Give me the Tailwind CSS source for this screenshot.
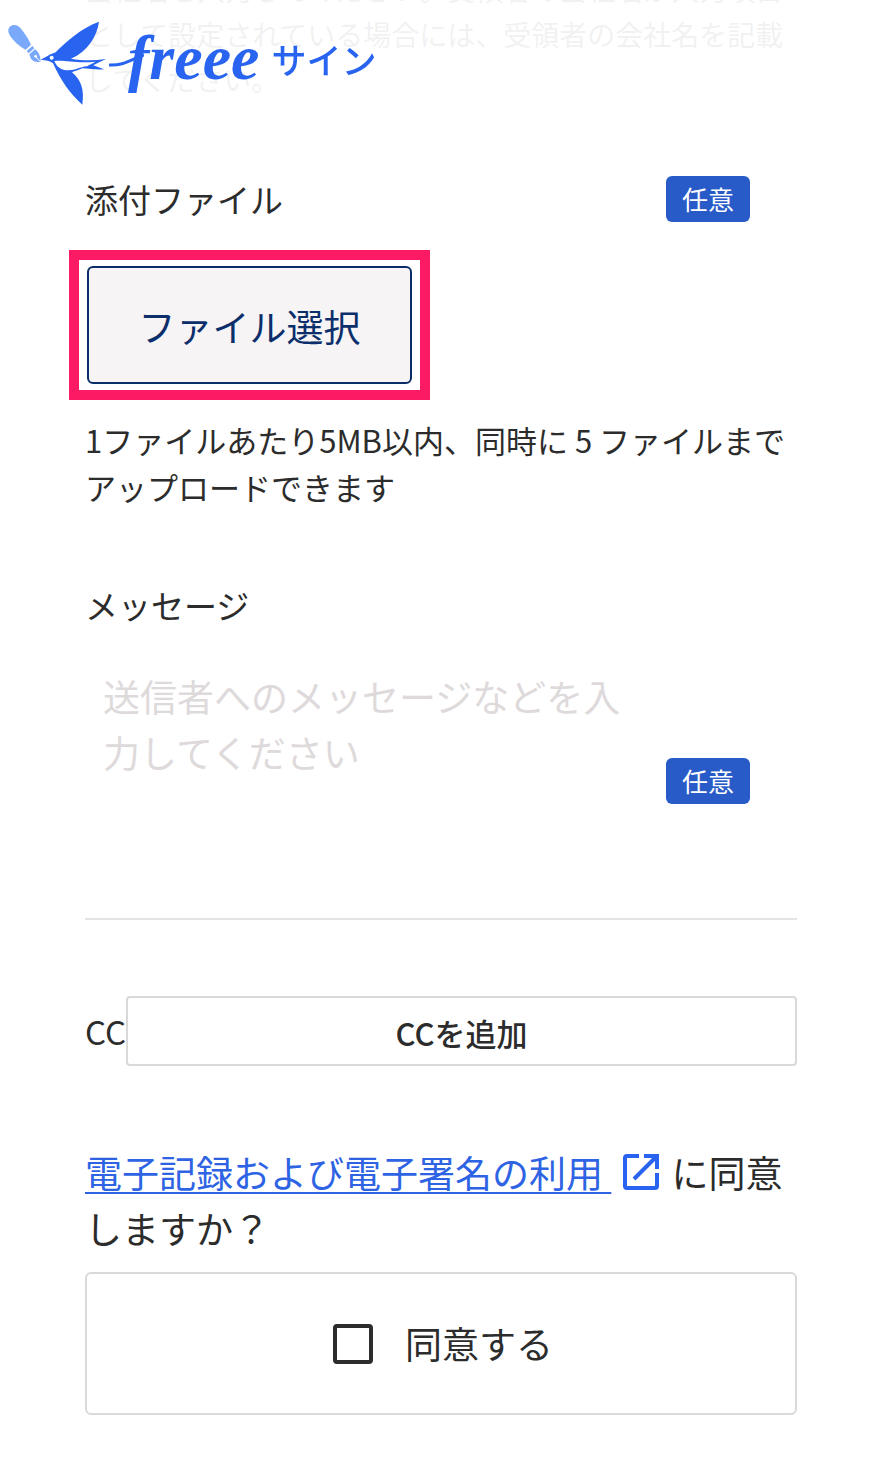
<!DOCTYPE html>
<html lang="ja">
  <head>
    <meta charset="UTF-8" />
    <meta name="viewport" content="width=device-width, initial-scale=1" />
    <title>freee サイン</title>
    <script src="https://cdn.jsdelivr.net/npm/@tailwindcss/browser@4"></script>
  </head>
  <body
    class="bg-white font-['Noto_Sans_CJK_JP',sans-serif] text-[#2c2c2c] overflow-x-hidden"
  >
    <!-- Header -->
    <header
      class="fixed inset-x-0 top-0 z-10 flex items-start h-[120px] pl-2 pt-5 bg-white/92 text-[#2864f0]"
    >
      <a href="#" class="flex items-start" aria-label="freee サイン">
        <svg class="w-[100px] h-[87px] shrink-0" viewBox="24 60 300 261">
          <!-- pen -->
          <path
            fill="#7aa9fb"
            d="M27 101C19 84 35 69 54 78C63 84 86 115 93 134L77 149C61 141 34 118 27 101Z"
          />
          <path
            fill="#7aa9fb"
            d="M80 153L97 138L103 145L86 160ZM88 163L105 148C115 154 122 168 122 185C108 188 97 184 92 175Z"
          />
          <path d="M121 185L107 170" stroke="#fff" stroke-width="3" />
          <circle cx="107" cy="169" r="4" fill="#fff" />
          <!-- swallow -->
          <path
            fill="#2864f0"
            d="M122 179L144 167C151 161 160 161 167 157C195 128 242 85 297 65C291 109 263 154 213 176C247 182 282 182 318 177C303 184 291 190 280 196L312 208C290 210 267 206 247 205C235 210 225 213 216 217C244 241 253 268 247 314C209 281 181 239 159 190C150 182 138 181 122 179Z"
          />
          <path
            fill="#fff"
            d="M163 183C198 180 229 191 287 185C277 190 268 195 261 199C239 201 226 211 205 211C184 211 171 202 163 183Z"
          />
          <path
            fill="none"
            stroke="#2864f0"
            stroke-width="4"
            d="M267 197L290 204"
          />
          <circle cx="155" cy="173" r="6" fill="#fff" />
        </svg>
        <svg class="w-9 h-[87px] shrink-0 -mr-4" viewBox="0 0 36 87">
          <path
            d="M1 45C15 46 22 40 36 35"
            fill="none"
            stroke="currentColor"
            stroke-width="3"
          />
        </svg>
        <span
          class="font-['Liberation_Serif',serif] italic font-bold text-[64px] leading-[76px]"
          >freee</span
        >
        <span class="ml-3 text-[35px] leading-[78px] font-medium">サイン</span>
      </a>
    </header>

    <main class="px-[85px] pb-12">
      <p class="-mt-[33px] text-[28px] leading-[45px] text-[#555]">
        会社名を入力してください。受領者の会社名が入力項目として設定されている場合には、受領者の会社名を記載してください。
      </p>

      <!-- Attachment -->
      <section class="mt-[74px]">
        <div class="flex items-center justify-between pr-[47px]">
          <h2 class="text-[33px] leading-[46px]">添付ファイル</h2>
          <span
            class="w-[84px] rounded-md bg-[#285ac8] text-center text-[26px] leading-[46px] text-white"
            >任意</span
          >
        </div>
        <div
          class="mt-7 -ml-4 w-fit border-[10px] border-[#fb1a63] px-2 py-1.5"
        >
          <button
            type="button"
            class="block w-[325px] h-[118px] pt-1 rounded-md border-2 border-[#0a2d69] bg-[#f6f4f5] text-[37px] text-[#0c2f6c]"
          >
            ファイル選択
          </button>
        </div>
        <p class="mt-4 text-[31px] leading-[47px]">
          1ファイルあたり5MB以内、同時に 5 ファイルまでアップロードできます
        </p>
      </section>

      <!-- Message -->
      <section class="mt-18 border-b-2 border-[#e4e4e4] pb-[13px]">
        <label for="message" class="block text-[33px] leading-[46px]"
          >メッセージ</label
        >
        <div class="mt-7 flex items-center justify-between pr-[47px]">
          <textarea
            id="message"
            name="message"
            placeholder="送信者へのメッセージなどを入力してください"
            class="block w-[564px] h-[249px] px-[18px] py-3 resize-none outline-none text-[37px] leading-[56px] placeholder:text-[#dedadb]"
          ></textarea>
          <span
            class="w-[84px] shrink-0 rounded-md bg-[#285ac8] text-center text-[26px] leading-[46px] text-white"
            >任意</span
          >
        </div>
      </section>

      <!-- CC -->
      <section class="mt-19 flex items-center">
        <h2 class="text-[33px] leading-[48px]">CC</h2>
        <button
          type="button"
          class="grow h-[70px] rounded-sm border-2 border-[#d9d9d9] pt-1 text-[31px] font-medium"
        >
          CCを追加
        </button>
      </section>

      <!-- Agreement -->
      <section class="mt-[78px]">
        <p class="text-[37px] leading-[56px]">
          <a
            href="#"
            class="text-[#2e64e4] underline decoration-2 underline-offset-4"
            >電子記録および電子署名の利用&nbsp;</a
          ><svg
            class="inline-block size-9 ml-3 mr-1 -mt-3 align-middle text-[#2864f0]"
            viewBox="0 0 36 36"
            fill="none"
            stroke="currentColor"
            stroke-width="4"
          >
            <path d="M16 2H4Q2 2 2 4V32Q2 34 4 34H32Q34 34 34 32V19" />
            <path d="M21 2H34V15M33 3L11 25" />
          </svg>
          に同意しますか？
        </p>
        <label
          class="mt-4 flex h-[143px] items-center justify-center gap-8 rounded-md border-2 border-[#d9d9d9] pl-1 text-[37px]"
        >
          <input
            type="checkbox"
            name="agree"
            class="appearance-none size-10 rounded-sm border-4 border-[#2c2c2c] checked:bg-[#2c2c2c]"
          />
          同意する
        </label>
      </section>
    </main>
  </body>
</html>
